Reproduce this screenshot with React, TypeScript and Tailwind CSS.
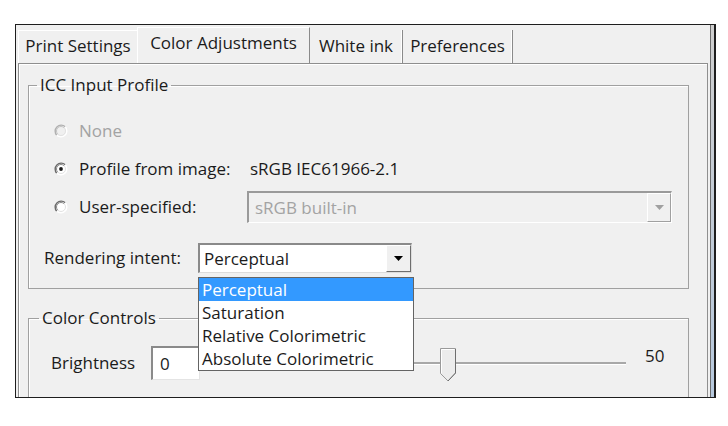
import React from "react";

type Tab = { label: string; w: string; active?: boolean };

const tabs: Tab[] = [
  { label: "Print Settings", w: "w-[119px]" },
  { label: "Color Adjustments", w: "w-[173px]", active: true },
  { label: "White ink", w: "w-[93px]" },
  { label: "Preferences", w: "w-[110px]" },
];

const intents = ["Perceptual", "Saturation", "Relative Colorimetric", "Absolute Colorimetric"];

function Radio({ checked, disabled }: { checked?: boolean; disabled?: boolean }) {
  const dark = disabled ? "#b0b0b0" : "#6a6a6a";
  const darker = disabled ? "#c4c4c4" : "#8c8c8c";
  return (
    <svg width="14" height="14" viewBox="0 0 14 14" className="shrink-0">
      <circle cx="7" cy="7" r="6" fill={disabled ? "#f0f0f0" : "#ffffff"} />
      <path d="M2.76 11.24 A6 6 0 0 1 11.24 2.76" fill="none" stroke={dark} strokeWidth="1.4" />
      <path d="M11.24 2.76 A6 6 0 0 1 2.76 11.24" fill="none" stroke="#ffffff" strokeWidth="1.4" />
      <path d="M3.8 10.2 A4.5 4.5 0 0 1 10.2 3.8" fill="none" stroke={darker} strokeWidth="1" />
      <path d="M10.2 3.8 A4.5 4.5 0 0 1 3.8 10.2" fill="none" stroke="#e2e2e2" strokeWidth="1" />
      {checked && <circle cx="7" cy="7" r="1.9" fill="#1b1b1b" />}
    </svg>
  );
}

function Arrow({ color }: { color: string }) {
  return (
    <svg width="9" height="5" viewBox="0 0 9 5">
      <path d="M0 0 H9 L4.5 5 Z" fill={color} />
    </svg>
  );
}

function Thumb() {
  return (
    <svg width="17" height="34" viewBox="0 0 17 34">
      <path d="M0.5 0.5 H15.5 V25 L8 33 L0.5 25.5 Z" fill="#ececec" stroke="#9a9a9a" />
      <path d="M15.5 1 V25 L8 33" fill="none" stroke="#6e6e6e" />
      <path d="M1.5 25 V1.5 H14.5" fill="none" stroke="#ffffff" />
    </svg>
  );
}

export default function App() {
  return (
    <div className="w-[728px] h-[426px] bg-white pt-[24px] pl-[15px] font-['Open_Sans',sans-serif] text-[17px] text-[#1b1b1b]">
      {/* Window */}
      <div className="w-[701px] h-[374px] flex bg-[#f0f0f0] border-t border-l border-b border-[#1e1e1e] overflow-hidden">
        <div className="flex-1 flex flex-col pt-[2px] pl-[2px] pr-[2px]">
          {/* Tab strip */}
          <div className="flex items-end h-[36px]">
            {tabs.map((t) => (
              <div
                key={t.label}
                className={
                  t.active
                    ? `${t.w} h-[36px] flex items-center justify-center pb-[5px] border-t border-l border-white border-r border-r-[#8a8a8a] whitespace-nowrap`
                    : t.label === "Print Settings"
                    ? `${t.w} h-[33px] flex items-center justify-center pb-[2px] border-t border-l border-white whitespace-nowrap`
                    : `${t.w} h-[33px] flex items-center justify-center pb-[2px] border-r border-r-[#8a8a8a] shadow-[inset_-1px_0_0_#ffffff] whitespace-nowrap`
                }
              >
                {t.label}
              </div>
            ))}
          </div>

          {/* Panel */}
          <div className="flex-1 border-t border-l border-r border-[#8e8e8e] shadow-[inset_1px_1px_0_#ffffff] pl-[9px] pr-[18px] flex flex-col">
            {/* ICC Input Profile */}
            <fieldset className="mt-[10px] border border-[#a0a0a0] shadow-[inset_1px_1px_0_#ffffff] pb-[15px]">
              <legend className="ml-[8px] px-[3px] leading-[22px]">ICC Input Profile</legend>
              <div className="pt-[16px] flex flex-col">
                <div className="h-[38px] flex items-center pl-[25px] gap-[11px]">
                  <Radio disabled />
                  <span className="text-[#a3a3a3]">None</span>
                </div>
                <div className="h-[38px] flex items-center pl-[25px] gap-[11px]">
                  <Radio checked />
                  <span className="w-[160px]">Profile from image:</span>
                  <span>sRGB IEC61966-2.1</span>
                </div>
                <div className="h-[38px] flex items-center pl-[25px] gap-[11px]">
                  <Radio />
                  <span className="w-[157px]">User-specified:</span>
                  <div className="w-[425px] h-[32px] flex border-t-2 border-l-2 border-t-[#9a9a9a] border-l-[#9a9a9a] border-b border-r border-white bg-[#f0f0f0]">
                    <span className="flex-1 pl-[6px] flex items-center text-[#a3a3a3]">sRGB built-in</span>
                    <div className="w-[24px] flex items-center justify-center border-l border-t border-white border-r border-b border-r-[#a0a0a0] border-b-[#a0a0a0]">
                      <Arrow color="#a0a0a0" />
                    </div>
                  </div>
                </div>
                <div className="mt-[17px] h-[30px] flex items-center pl-[15px]">
                  <span className="w-[154px]">Rendering intent:</span>
                  <div className="relative">
                    <div className="w-[214px] h-[30px] flex bg-white border-t-2 border-l-2 border-t-[#8a8a8a] border-l-[#8a8a8a] border-b border-r border-[#dcdcdc]">
                      <span className="flex-1 pl-[4px] flex items-center">Perceptual</span>
                      <div className="w-[25px] flex items-center justify-center bg-[#f0f0f0] border-l border-t border-white border-r border-b border-r-[#6e6e6e] border-b-[#6e6e6e]">
                        <Arrow color="#000000" />
                      </div>
                    </div>
                    {/* Open list */}
                    <div className="absolute z-10 left-0 top-full mt-[4px] w-[216px] bg-white border border-[#646464]">
                      {intents.map((it, i) => (
                        <div
                          key={it}
                          className={
                            i === 0
                              ? "h-[23px] pl-[3px] flex items-center bg-[#3399ff] text-white whitespace-nowrap"
                              : "h-[23px] pl-[3px] flex items-center whitespace-nowrap"
                          }
                        >
                          {it}
                        </div>
                      ))}
                    </div>
                  </div>
                </div>
              </div>
            </fieldset>

            {/* Color Controls */}
            <fieldset className="mt-[18px] border border-[#a0a0a0] shadow-[inset_1px_1px_0_#ffffff] pb-[20px]">
              <legend className="ml-[10px] px-[3px] leading-[22px]">Color Controls</legend>
              <div className="pt-[17px] flex items-center pl-[22px] h-[51px]">
                <span className="w-[100px]">Brightness</span>
                <div className="w-[49px] h-[34px] bg-white border-t-2 border-l-2 border-t-[#8a8a8a] border-l-[#8a8a8a] border-b border-r border-[#e4e4e4] pl-[7px] flex items-center">
                  0
                </div>
                <div className="relative ml-[15px] w-[411px] h-[34px] flex items-center">
                  <div className="w-full h-[3px] bg-[#a8a8a8] border-b border-white" />
                  <div className="absolute left-[225px] top-[2px]">
                    <Thumb />
                  </div>
                </div>
                <span className="ml-[19px] mb-[14px]">50</span>
              </div>
            </fieldset>
          </div>
        </div>
        {/* Right frame edge */}
        <div className="w-[6px] border-l border-[#6b6b6b] border-r-2 border-r-[#1e1e1e] bg-gradient-to-b from-[#cfcfcf] to-[#b7c9de]" />
      </div>
    </div>
  );
}
